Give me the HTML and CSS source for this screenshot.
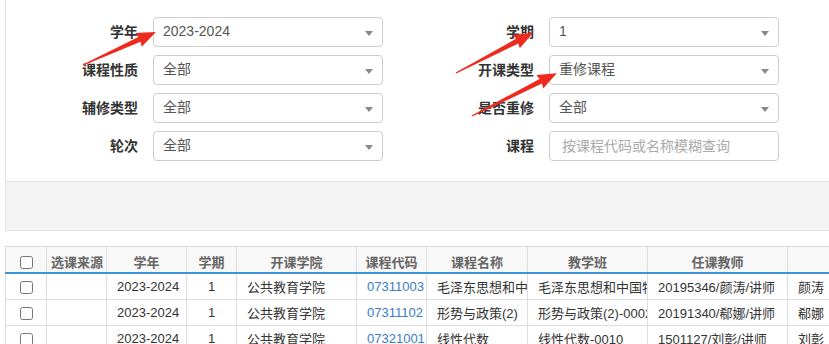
FILE: index.html
```html
<!DOCTYPE html>
<html>

<head>
    <title>重修课程查询</title>

    <link rel="stylesheet" href="styles.css">
</head>

<body>
    <div class="page">
        <section class="query-panel">
            <form class="query-form">
                <label class="form-label">学年</label>
                <div class="select-box">2023-2024</div>
                <label class="form-label">学期</label>
                <div class="select-box">1</div>

                <label class="form-label">课程性质</label>
                <div class="select-box">全部</div>
                <label class="form-label">开课类型</label>
                <div class="select-box">重修课程</div>

                <label class="form-label">辅修类型</label>
                <div class="select-box">全部</div>
                <label class="form-label">是否重修</label>
                <div class="select-box">全部</div>

                <label class="form-label">轮次</label>
                <div class="select-box">全部</div>
                <label class="form-label">课程</label>
                <input class="text-box" type="text" placeholder="按课程代码或名称模糊查询">
            </form>

            <div class="panel-footer"></div>

            <!-- red hint arrows drawn over the form -->
            <svg class="hint-arrows" width="829" height="181" viewBox="0 0 829 181">
                <g transform="translate(83 65) rotate(-24.3)">
                    <polygon points="0,-0.6 62,-2.6 61,-7.5 80,0 61,7.5 62,2.6 0,0.6" />
                </g>
                <g transform="translate(456 73) rotate(-27.5)">
                    <polygon points="0,-0.6 69,-2.6 68,-7.5 87,0 68,7.5 69,2.6 0,0.6" />
                </g>
                <g transform="translate(472 116) rotate(-26.8)">
                    <polygon points="0,-0.6 77,-2.6 76,-7.5 95,0 76,7.5 77,2.6 0,0.6" />
                </g>
            </svg>
        </section>

        <table class="course-table">
            <colgroup>
                <col style="width: 41px">
                <col style="width: 60px">
                <col style="width: 80px">
                <col style="width: 50px">
                <col style="width: 120px">
                <col style="width: 70px">
                <col style="width: 101px">
                <col style="width: 120px">
                <col style="width: 140px">
                <col style="width: 100px">
            </colgroup>
            <thead>
                <tr>
                    <th><input type="checkbox"></th>
                    <th>选课来源</th>
                    <th>学年</th>
                    <th>学期</th>
                    <th>开课学院</th>
                    <th>课程代码</th>
                    <th>课程名称</th>
                    <th>教学班</th>
                    <th>任课教师</th>
                    <th></th>
                </tr>
            </thead>
            <tbody>
                <tr>
                    <td class="center"><input type="checkbox"></td>
                    <td></td>
                    <td class="center">2023-2024</td>
                    <td class="center">1</td>
                    <td>公共教育学院</td>
                    <td class="code">07311003</td>
                    <td>毛泽东思想和中国特色社会主义理论体系概论</td>
                    <td>毛泽东思想和中国特色社会主义理论体系概论-0001</td>
                    <td>20195346/颜涛/讲师</td>
                    <td>颜涛</td>
                </tr>
                <tr>
                    <td class="center"><input type="checkbox"></td>
                    <td></td>
                    <td class="center">2023-2024</td>
                    <td class="center">1</td>
                    <td>公共教育学院</td>
                    <td class="code">07311102</td>
                    <td>形势与政策(2)</td>
                    <td>形势与政策(2)-0002</td>
                    <td>20191340/郗娜/讲师</td>
                    <td>郗娜</td>
                </tr>
                <tr>
                    <td class="center"><input type="checkbox"></td>
                    <td></td>
                    <td class="center">2023-2024</td>
                    <td class="center">1</td>
                    <td>公共教育学院</td>
                    <td class="code">07321001</td>
                    <td>线性代数</td>
                    <td>线性代数-0010</td>
                    <td>1501127/刘彰/讲师</td>
                    <td>刘彰</td>
                </tr>
            </tbody>
        </table>
    </div>
</body>

</html>
```

FILE: styles.css
```css
body {
    font-family: "Liberation Sans", "Noto Sans CJK SC", sans-serif;
    margin: 0;
    padding: 0;
    background-color: #fff;
    color: #333;
    overflow: hidden;
}

.page {
    padding-left: 5px;
}

.query-panel {
    position: relative;
    border-left: 1px solid #e3e3e3;
}

.query-form {
    display: grid;
    grid-template-columns: 132px 230px 136px 230px;
    column-gap: 15px;
    row-gap: 8px;
    padding: 17px 0 20px 0;
}

.form-label {
    font-size: 14px;
    font-weight: bold;
    color: #333;
    text-align: right;
    line-height: 30px;
}

.select-box {
    position: relative;
    box-sizing: border-box;
    height: 30px;
    border: 1px solid #ccc;
    border-radius: 4px;
    padding: 0 28px 0 9px;
    font-size: 14px;
    line-height: 27px;
    color: #555;
    background-color: #fff;
}

/* the little dropdown triangle */
.select-box::after {
    content: "";
    position: absolute;
    right: 9px;
    top: 13px;
    border-left: 4px solid transparent;
    border-right: 4px solid transparent;
    border-top: 5px solid #888;
}

.text-box {
    box-sizing: border-box;
    height: 30px;
    border: 1px solid #ccc;
    border-radius: 4px;
    padding: 0 12px;
    font-family: inherit;
    font-size: 14px;
    color: #555;
    outline: none;
}

.text-box::placeholder {
    color: #aaa;
}

.panel-footer {
    height: 48px;
    background-color: #f3f3f3;
    border-top: 1px solid #e3e3e3;
    border-bottom: 1px solid #e3e3e3;
    margin-right: -10px;
}

.hint-arrows {
    position: absolute;
    left: -6px;
    top: 0;
    pointer-events: none;
}

.hint-arrows polygon {
    fill: #ee2a1e;
}

.course-table {
    margin-top: 15px;
    border-collapse: collapse;
    table-layout: fixed;
    width: 882px;
    font-size: 13px;
}

.course-table th {
    height: 22px;
    padding: 3px 4px 0 4px;
    background-color: #f8f8f8;
    color: #666;
    font-weight: bold;
    border: 1px solid #ddd;
    border-bottom: 2px solid #3d94db;
    white-space: nowrap;
    overflow: hidden;
}

.course-table td {
    height: 25px;
    padding: 0 10px;
    border: 1px solid #ddd;
    white-space: nowrap;
    overflow: hidden;
    text-overflow: clip;
}

.course-table input[type="checkbox"] {
    margin: 0;
    width: 13px;
    height: 13px;
    vertical-align: middle;
}

.course-table .center {
    text-align: center;
}

.course-table .code {
    color: #3a7bc8;
}
```
